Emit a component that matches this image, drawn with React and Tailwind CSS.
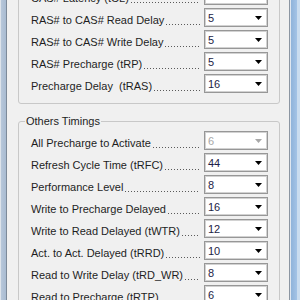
import React from "react";

const upperRows = [
  { label: "CAS# Latency (tCL)", value: "5" },
  { label: "RAS# to CAS# Read Delay", value: "5" },
  { label: "RAS# to CAS# Write Delay", value: "5" },
  { label: "RAS# Precharge (tRP)", value: "5" },
  { label: "Precharge Delay  (tRAS)", value: "16" },
];

const otherRows = [
  { label: "All Precharge to Activate", value: "6", disabled: true },
  { label: "Refresh Cycle Time (tRFC)", value: "44" },
  { label: "Performance Level", value: "8" },
  { label: "Write to Precharge Delayed", value: "16" },
  { label: "Write to Read Delayed (tWTR)", value: "12" },
  { label: "Act. to Act. Delayed (tRRD)", value: "10" },
  { label: "Read to Write Delay (tRD_WR)", value: "8" },
  { label: "Read to Precharge (tRTP)", value: "6" },
];

const Combo = ({ value, disabled }) => (
  <div className="w-[64px] h-[19px] border border-[#979797] bg-white flex">
    <div className="flex-1 flex border border-[#d2d2d2]">
      <span
        className={`flex-1 pl-[2px] leading-[17px] ${disabled ? "text-[#a8a8a8]" : "text-[#1d1d46]"}`}
      >
        {value}
      </span>
      <div className="w-[15px] flex items-center justify-center">
        <svg width="7" height="4" viewBox="0 0 7 4">
          <path d="M0 0H7L3.5 4Z" fill={disabled ? "#a8a8a8" : "#000"} />
        </svg>
      </div>
    </div>
  </div>
);

const Row = ({ label, value, disabled }) => (
  <div className="flex items-start h-[22px]">
    <div className="w-[169px] mr-[4px] flex items-start">
      <span className="whitespace-pre leading-[22px] pt-[1px] text-[#1e1e1e]">{label}</span>
      {/* dotted leader */}
      <div className="flex-1 mt-[16px] ml-[2px] h-[1px] bg-[linear-gradient(to_right,#5a5a5a_1px,transparent_1px)] bg-[length:3px_1px]" />
    </div>
    <Combo value={value} disabled={disabled} />
  </div>
);

export default function App() {
  return (
    <div
      className="w-[300px] h-[300px] overflow-hidden flex text-[11px]"
      style={{ fontFamily: '"Liberation Sans", Arial, sans-serif' }}
    >
      {/* left window frame */}
      <div className="w-[7px] flex shrink-0">
        <div className="w-[1px] bg-[#dde3ea]" />
        <div className="w-[5px] bg-gradient-to-r from-[#b7c7da] to-[#a9bbd1]" />
        <div className="w-[1px] bg-[#7d8a99]" />
      </div>

      <div className="flex-1 bg-[#f0f0f0] pl-[11px] pr-[9px]">
        {/* DRAM timings group */}
        <div className="-mt-[30px] border border-[#c8c8c8] rounded-[3px] pt-[15px] pb-[7px] pl-[12px]">
          {upperRows.map((r) => (
            <Row key={r.label} {...r} />
          ))}
        </div>

        {/* Others Timings group */}
        <div className="relative mt-[17px] border border-[#c8c8c8] rounded-[3px] pt-[9px] pl-[12px]">
          <span className="absolute left-[6px] -top-[7px] px-[1px] leading-[13px] bg-[#f0f0f0] text-[#1e1e1e]">
            Others Timings
          </span>
          {otherRows.map((r) => (
            <Row key={r.label} {...r} />
          ))}
        </div>
      </div>

      {/* right window frame */}
      <div className="w-[11px] flex shrink-0">
        <div className="w-[1px] bg-[#8c96a2]" />
        <div className="w-[1px] bg-[#dfe7f0]" />
        <div className="w-[6px] bg-gradient-to-r from-[#8fb3da] to-[#a3c3e6]" />
        <div className="w-[3px] bg-[#c9dcef]" />
      </div>
    </div>
  );
}
